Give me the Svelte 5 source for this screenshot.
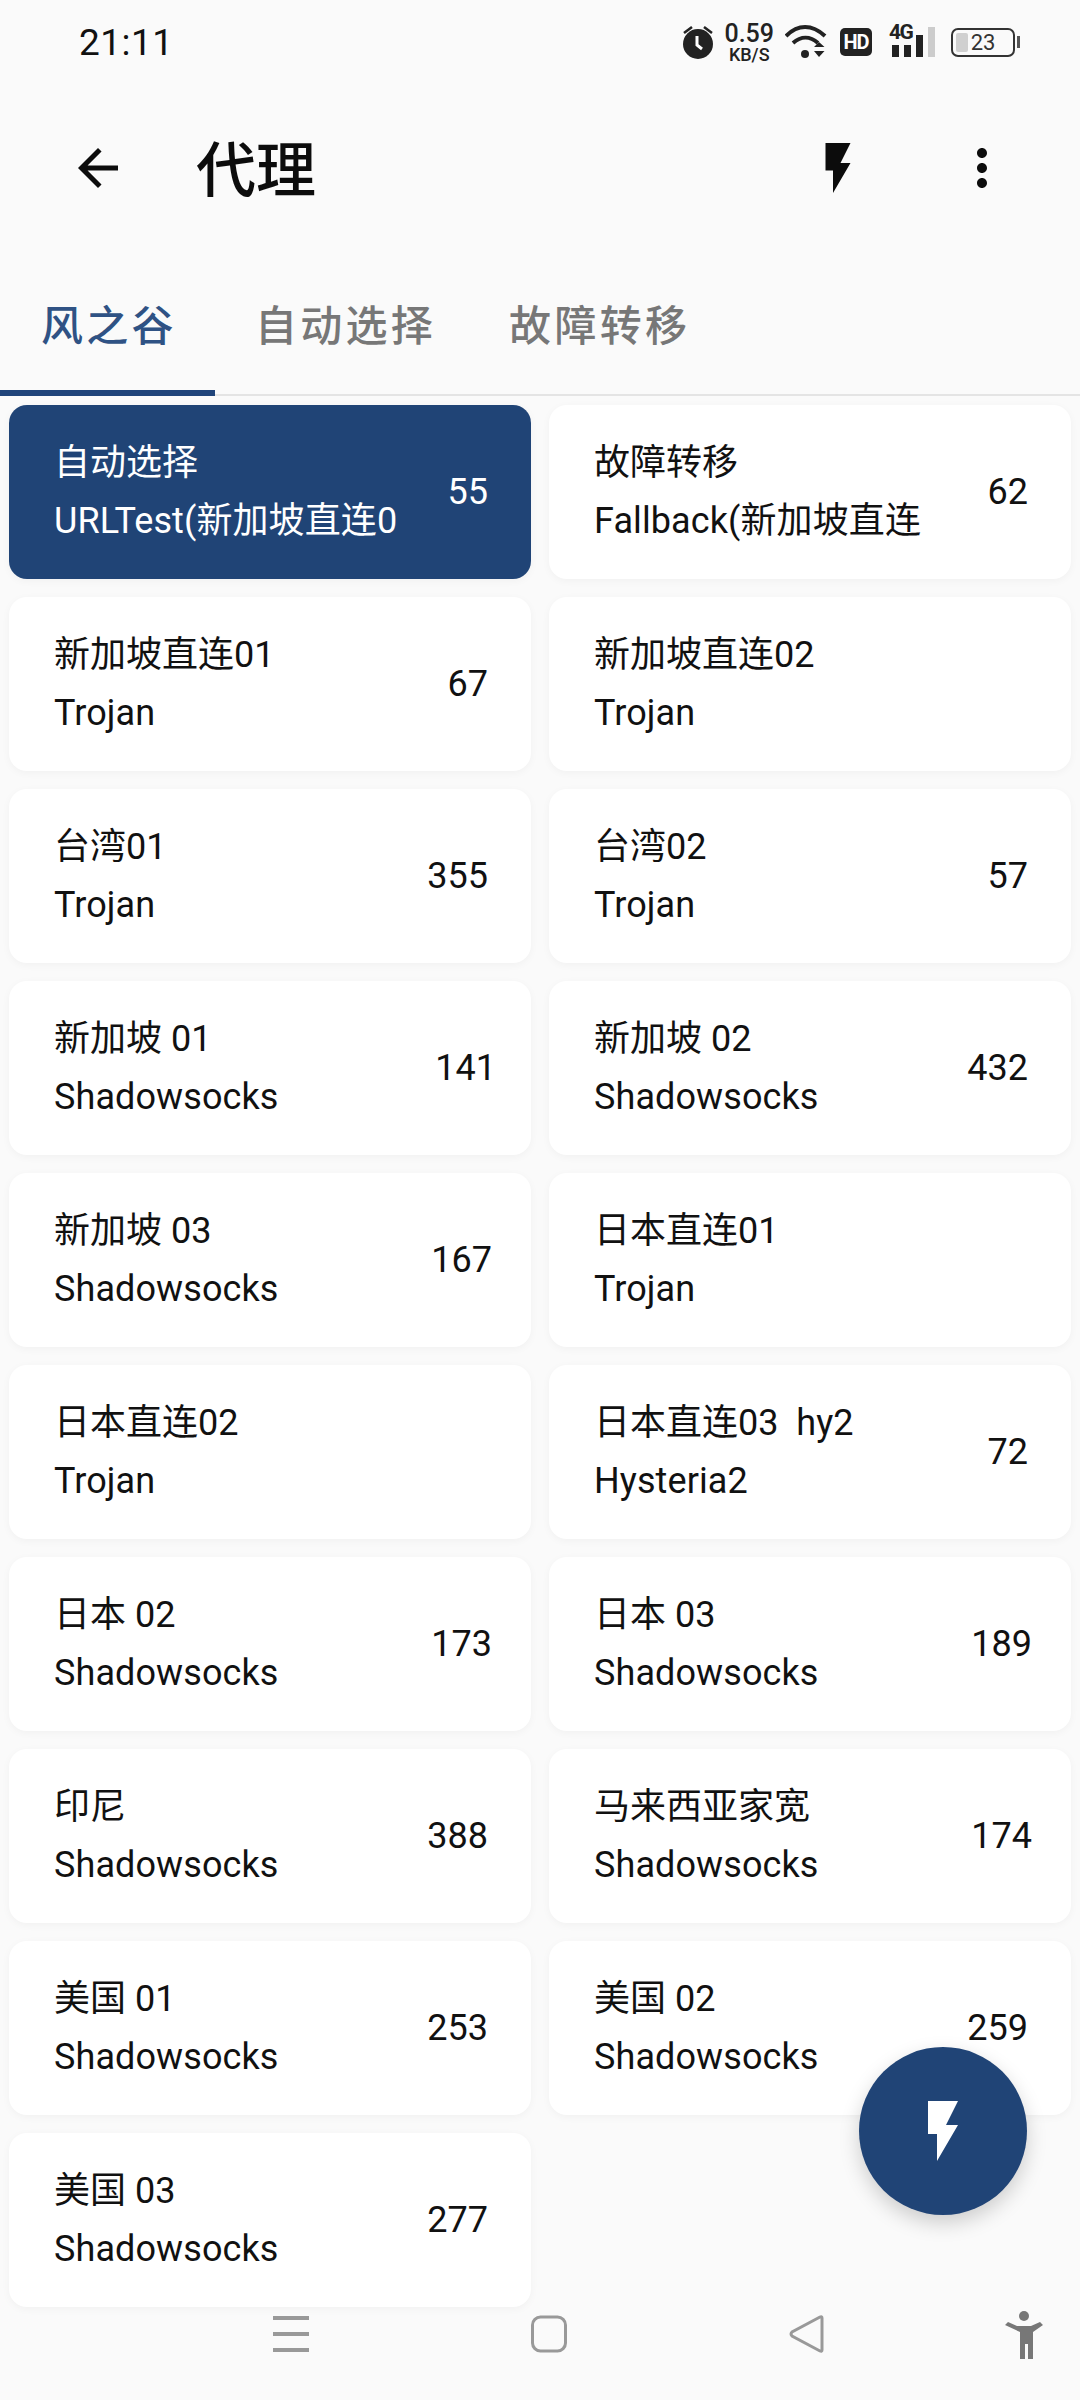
<script>
	const tabs = ['风之谷', '自动选择', '故障转移'];

	const proxies = [
		{ name: '自动选择', type: 'URLTest(新加坡直连0', delay: 55, active: true },
		{ name: '故障转移', type: 'Fallback(新加坡直连', delay: 62 },
		{ name: '新加坡直连01', type: 'Trojan', delay: 67 },
		{ name: '新加坡直连02', type: 'Trojan' },
		{ name: '台湾01', type: 'Trojan', delay: 355 },
		{ name: '台湾02', type: 'Trojan', delay: 57 },
		{ name: '新加坡 01', type: 'Shadowsocks', delay: 141 },
		{ name: '新加坡 02', type: 'Shadowsocks', delay: 432 },
		{ name: '新加坡 03', type: 'Shadowsocks', delay: 167 },
		{ name: '日本直连01', type: 'Trojan' },
		{ name: '日本直连02', type: 'Trojan' },
		{ name: '日本直连03  hy2', type: 'Hysteria2', delay: 72 },
		{ name: '日本 02', type: 'Shadowsocks', delay: 173 },
		{ name: '日本 03', type: 'Shadowsocks', delay: 189 },
		{ name: '印尼', type: 'Shadowsocks', delay: 388 },
		{ name: '马来西亚家宽', type: 'Shadowsocks', delay: 174 },
		{ name: '美国 01', type: 'Shadowsocks', delay: 253 },
		{ name: '美国 02', type: 'Shadowsocks', delay: 259 },
		{ name: '美国 03', type: 'Shadowsocks', delay: 277 }
	];

	const ones = (delay) => String(delay).split('1').length - 1;
</script>

<div class="screen">
	<div class="status">
		<span class="time">21:11</span>
		<div class="status-icons">
			<svg class="alarm" width="30" height="34" viewBox="0 0 30 34">
				<circle cx="15" cy="19" r="15" fill="#222" />
				<path d="M14 11v9l5 4" fill="none" stroke="#fff" stroke-width="3" />
				<path d="M1 8l8-6M29 8l-8-6" stroke="#222" stroke-width="2.6" />
			</svg>
			<div class="speed">
				<span>0.59</span>
				<span class="unit">KB/S</span>
			</div>
			<svg class="wifi" width="44" height="34" viewBox="0 0 44 34">
				<path d="M1 11C13 -1 27 -1 40 11" fill="none" stroke="#222" stroke-width="4" />
				<path d="M8 18c8-7 17-7 25 0" fill="none" stroke="#222" stroke-width="4" />
				<circle cx="20" cy="29" r="4" fill="#222" />
				<path d="M29 22l5-5 5.500 5zM29 26l5 6 5.500-6z" fill="#222" />
			</svg>
			<div class="hd">HD</div>
			<div class="signal">
				<span class="net">4G</span>
				<svg width="46" height="30" viewBox="0 0 46 30">
					<rect x="3" y="18" width="7" height="12" fill="#222" />
					<rect x="15" y="18" width="7" height="12" fill="#222" />
					<rect x="27" y="8" width="7" height="22" fill="#222" />
					<rect x="39" y="0" width="7" height="30" fill="#ccc" />
				</svg>
			</div>
			<div class="battery">
				<div class="battery-fill"></div>
				<span>23</span>
			</div>
		</div>
	</div>

	<header class="appbar">
		<svg class="icon back" viewBox="0 0 24 24"><path d="M20 11H7.830l5.590-5.590L12 4l-8 8 8 8 1.410-1.410L7.830 13H20v-2z" /></svg>
		<h1>代理</h1>
		<svg class="icon bolt" viewBox="0 0 24 24"><path d="M7 2v11h3v9l7-12h-4l4-8z" /></svg>
		<svg class="icon more" viewBox="0 0 24 24"><path d="M12 8c1.100 0 2-.9 2-2s-.9-2-2-2-2 .9-2 2 .9 2 2 2zm0 2c-1.100 0-2 .9-2 2s.9 2 2 2 2-.9 2-2-.9-2-2-2zm0 6c-1.100 0-2 .9-2 2s.9 2 2 2 2-.9 2-2-.9-2-2-2z" /></svg>
	</header>

	<nav class="tabs">
		{#each tabs as tab, i}
			<div class="tab" class:selected={i === 0}>{tab}</div>
		{/each}
	</nav>

	<div class="grid">
		{#each proxies as proxy}
			<div class="card" class:active={proxy.active}>
				<div class="info">
					<div class="name">{proxy.name}</div>
					<div class="type">{proxy.type}</div>
				</div>
				{#if proxy.delay}
					<div class="delay" style="margin-right: {ones(proxy.delay) * -4}px">{proxy.delay}</div>
				{/if}
			</div>
		{/each}
	</div>

	<button class="fab" aria-label="测速">
		<svg viewBox="0 0 24 24"><path d="M7 2v11h3v9l7-12h-4l4-8z" /></svg>
	</button>

	<div class="navbar">
		<svg width="36" height="38" viewBox="0 0 36 38">
			<path d="M0 3h36M0 19h36M0 35h36" stroke="#999" stroke-width="4" />
		</svg>
		<svg width="36" height="38" viewBox="0 0 36 38">
			<rect x="1.500" y="2" width="33" height="34" rx="8" fill="none" stroke="#999" stroke-width="3" />
		</svg>
		<svg width="36" height="38" viewBox="0 0 36 38">
			<path d="M33 3v32q0 2-2 1L3 21q-2-2 0-4L31 2q2-1 2 1z" fill="none" stroke="#999" stroke-width="3" />
		</svg>
		<svg class="person" width="38" height="48" viewBox="0 0 38 48">
			<circle cx="19" cy="5" r="5" fill="#777" />
			<path d="M0 14l3-3 9 4h14l9-4 3 3-10 7v27h-5V33h-3v15h-5V21z" fill="#777" />
		</svg>
	</div>
</div>

<style>
	:global(body) {
		background: #fafafa;
	}

	.screen {
		position: relative;
		width: 1080px;
		height: 2400px;
		overflow: hidden;
		background: #fafafa;
		font-family: Roboto, "Noto Sans CJK SC", sans-serif;
		color: #111;
	}

	.status {
		display: flex;
		justify-content: space-between;
		align-items: center;
		height: 84px;
		padding: 0 62px 0 79px;
		box-sizing: border-box;
	}

	.time {
		font-size: 37px;
		letter-spacing: 0.500px;
		color: #111;
	}

	.status-icons {
		display: flex;
		align-items: center;
		gap: 11px;
		color: #222;
	}

	.speed {
		display: flex;
		flex-direction: column;
		align-items: center;
		font-size: 25px;
		font-weight: 500;
		line-height: 25px;
	}

	.speed .unit {
		font-size: 18px;
		line-height: 18px;
	}

	.hd {
		width: 32px;
		height: 28px;
		border-radius: 5px;
		background: #222;
		color: #fff;
		font-size: 20px;
		font-weight: 700;
		line-height: 28px;
		text-align: center;
		letter-spacing: -1px;
	}

	.signal {
		position: relative;
		display: flex;
		width: 46px;
		margin-left: 6px;
	}

	.signal .net {
		position: absolute;
		left: 0;
		top: -7px;
		font-size: 21px;
		font-weight: 700;
		letter-spacing: -1.500px;
	}

	.battery {
		position: relative;
		display: flex;
		align-items: center;
		justify-content: center;
		width: 64px;
		height: 29px;
		box-sizing: border-box;
		margin-left: 5px;
		margin-right: 3px;
		border: 2.500px solid #333;
		border-radius: 7px;
		font-size: 22px;
		color: #333;
	}

	.battery::after {
		content: '';
		position: absolute;
		right: -7px;
		top: 6px;
		width: 3px;
		height: 12px;
		background: #555;
	}

	.battery-fill {
		position: absolute;
		left: 3px;
		top: 3px;
		bottom: 3px;
		width: 12px;
		border-radius: 2px;
		background: #d0d0d0;
	}

	.battery span {
		position: relative;
	}

	.appbar {
		display: flex;
		align-items: center;
		height: 168px;
		padding-left: 68px;
		padding-right: 68px;
	}

	.icon {
		width: 60px;
		height: 60px;
		fill: #0c0c0c;
		flex: none;
	}

	h1 {
		margin: -5px 0 0 68px;
		flex: 1;
		font-size: 60px;
		font-weight: 500;
		color: #0c0c0c;
	}

	.more {
		margin-left: 84px;
	}

	.tabs {
		display: flex;
		height: 144px;
		box-sizing: border-box;
		border-bottom: 2px solid #e4e4e4;
	}

	.tab {
		position: relative;
		padding: 0 33px 0 40px;
		height: 142px;
		line-height: 150px;
		font-size: 42px;
		letter-spacing: 3.300px;
		color: #777;
		font-weight: 500;
	}

	.tab.selected {
		padding: 0 38px 0 41px;
		color: #2f5284;
	}

	.tab.selected::after {
		content: '';
		position: absolute;
		left: 0;
		right: 0;
		bottom: -2px;
		height: 6px;
		background: #20447a;
	}

	.grid {
		display: grid;
		grid-template-columns: 1fr 1fr;
		grid-auto-rows: 174px;
		gap: 18px;
		padding: 9px;
	}

	.card {
		display: flex;
		align-items: center;
		justify-content: space-between;
		padding: 0 43px 0 45px;
		border-radius: 18px;
		background: #fff;
		box-shadow: 0 2px 8px rgba(0, 0, 0, 0.04);
		font-size: 36px;
		color: #111;
	}

	.card.active {
		background: #204476;
		color: #fff;
	}

	.info {
		display: flex;
		flex-direction: column;
		gap: 0;
		min-width: 0;
		white-space: pre;
	}

	.name,
	.type {
		line-height: 58px;
	}

	.type {
		letter-spacing: 0.100px;
	}

	.fab {
		position: absolute;
		left: 859px;
		top: 2047px;
		width: 168px;
		height: 168px;
		padding: 0;
		border: none;
		border-radius: 50%;
		background: #204476;
		box-shadow: 0 8px 20px rgba(0, 0, 0, 0.18);
	}

	.fab svg {
		display: block;
		width: 72px;
		height: 72px;
		margin: 48px;
		fill: #fff;
	}

	.navbar {
		position: absolute;
		left: 0;
		right: 0;
		top: 2315px;
		height: 85px;
	}

	.navbar svg {
		position: absolute;
		top: 0;
	}

	.navbar svg:nth-child(1) {
		left: 273px;
	}

	.navbar svg:nth-child(2) {
		left: 531px;
	}

	.navbar svg:nth-child(3) {
		left: 789px;
	}

	.navbar .person {
		left: 1005px;
		top: -4px;
	}
</style>
